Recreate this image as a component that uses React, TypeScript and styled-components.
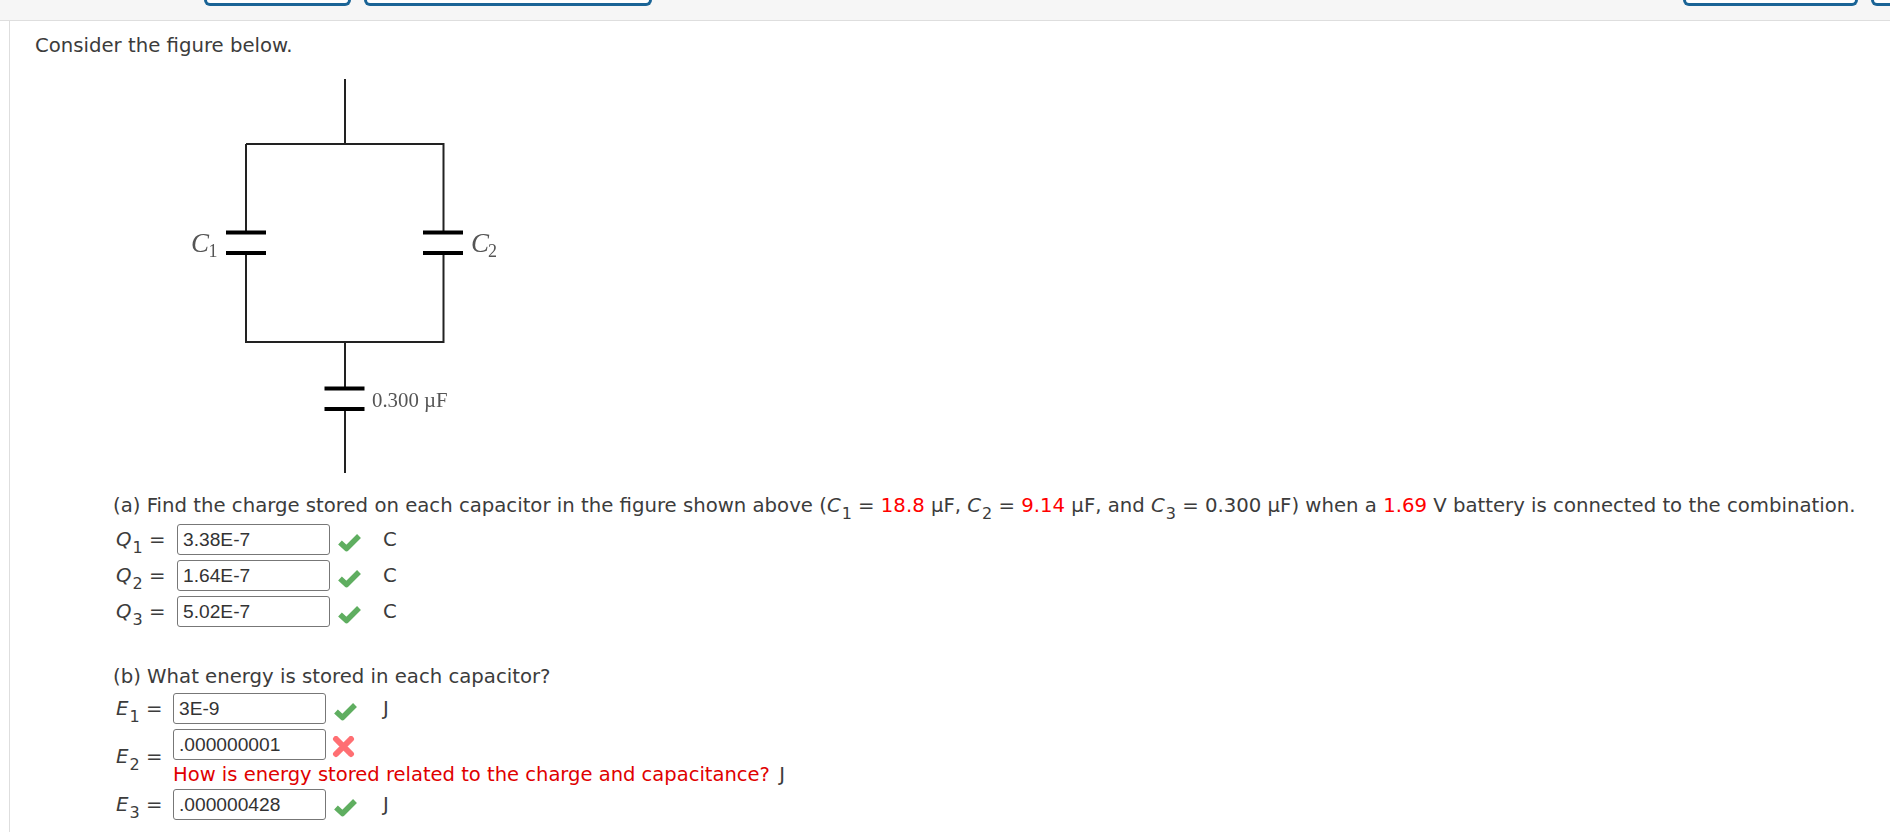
import React from 'react';
import styled, { createGlobalStyle } from 'styled-components';

const GlobalStyle = createGlobalStyle`
  html, body {
    margin: 0;
    padding: 0;
    height: 100%;
    overflow: hidden;
    background: #fff;
    color: #3c3c3c;
    font-family: "DejaVu Sans", Verdana, sans-serif;
    font-size: 19.7px;
  }
`;

const TopBar = styled.div`
  display: flex;
  gap: 13px;
  height: 20px;
  padding-left: 204px;
  background: #f6f6f6;
  border-bottom: 1px solid #dedede;
  overflow: hidden;
`;

const BarButton = styled.div<{ $width: number; $push?: boolean; $bleed?: number }>`
  flex: none;
  box-sizing: border-box;
  width: ${p => p.$width}px;
  height: 6px;
  margin-left: ${p => (p.$push ? 'auto' : '0')};
  margin-right: ${p => -(p.$bleed ?? 0)}px;
  background: #fff;
  border: 3px solid #1a6496;
  border-top: 0;
  border-radius: 0 0 6px 6px;
`;

const Main = styled.div`
  margin-left: 9px;
  padding: 14px 0 0 25px;
  height: 800px;
  border-left: 1px solid #dedede;
`;

const Text = styled.div`
  line-height: 22px;
  white-space: nowrap;
`;

const Figure = styled.svg`
  display: block;
  width: 340px;
  height: 425px;
  margin: 13px 0 0 145px;
`;

const Part = styled.div<{ $top?: number }>`
  margin-left: 78px;
  margin-top: ${p => p.$top ?? 0}px;
`;

const Rows = styled.div<{ $top: number }>`
  display: flex;
  flex-direction: column;
  gap: 5px;
  margin-top: ${p => p.$top}px;
`;

const Row = styled.div`
  display: flex;
  align-items: center;
`;

const Label = styled.div<{ $width: number }>`
  flex: none;
  width: ${p => p.$width}px;
  padding-left: 3px;
  box-sizing: border-box;
  white-space: nowrap;
`;

const Var = styled.i`
  font-style: italic;
`;

const Sub = styled.sub`
  font-size: 16px;
  line-height: 0;
  vertical-align: -7px;
  padding-left: 1px;
`;

const Field = styled.div`
  display: flex;
  align-items: center;
  box-sizing: border-box;
  width: 153px;
  height: 31px;
  padding-left: 5px;
  border: 1px solid #777;
  border-radius: 3px;
  font-family: "Liberation Sans", Arial, sans-serif;
  font-size: 19.2px;
  color: #333;
`;

const Mark = styled.svg`
  flex: none;
  width: 26px;
  height: 22px;
  margin: 5px 0 0 6px;
  filter: blur(0.5px);
`;

const Unit = styled.span<{ $gap: number }>`
  margin-left: ${p => p.$gap}px;
`;

const Red = styled.span`
  color: #f00;
`;

const Hint = styled.div`
  margin: 5px 0 -1px;
  line-height: 20px;
  font-size: 19.55px;
  color: #e00000;
  white-space: nowrap;
`;

const HintUnit = styled.span`
  margin-left: 3px;
  color: #3c3c3c;
`;

const CircuitGroup = styled.g`
  filter: blur(0.45px);
`;

const Check = () => (
  <Mark viewBox="0 0 26 22">
    <path d="M4 11.5 L10.5 17.5 L23 5" fill="none" stroke="#5fae60" strokeWidth="5.5" strokeLinejoin="round" />
  </Mark>
);

const Cross = () => (
  <Mark viewBox="0 0 26 22">
    <path d="M4 3 L19 18 M19 3 L4 18" fill="none" stroke="#ff6f73" strokeWidth="6" strokeLinecap="round" />
  </Mark>
);

// the circuit image, coordinates are page pixels minus the svg origin (180, 70)
const Circuit = () => (
  <Figure viewBox="0 0 340 425">
    <CircuitGroup>
      <g fill="none" stroke="#222" strokeWidth="2">
        <path d="M165 9 V74 M66 74 H263.5 V162 M66 74 V162 M66 183 V272 H263.5 V183" />
        <path d="M165 272 V318 M165 339 V403" />
      </g>
      <g fill="none" stroke="#000" strokeWidth="3.8">
        <path d="M46 162.5 H86 M46 183 H86" />
        <path d="M243 162.5 H283 M243 183 H283" />
        <path d="M144.5 318.5 H184.5 M144.5 339 H184.5" />
      </g>
      <g fill="#555" fontFamily="'Liberation Serif', serif">
        <text x="11" y="181.5" fontSize="27" fontStyle="italic">C</text>
        <text x="28.5" y="187" fontSize="18">1</text>
        <text x="291" y="181.5" fontSize="27" fontStyle="italic">C</text>
        <text x="308" y="187" fontSize="18">2</text>
        <text x="192" y="337" fontSize="20.8">0.300 µF</text>
      </g>
    </CircuitGroup>
  </Figure>
);

const App: React.FC = () => (
  <>
    <GlobalStyle />
    <TopBar>
      <BarButton $width={147} />
      <BarButton $width={288} />
      <BarButton $width={175} $push />
      <BarButton $width={60} $bleed={41} />
    </TopBar>
    <Main>
      <Text>Consider the figure below.</Text>
      <Circuit />
      <Part>
        <Text>
          (a) Find the charge stored on each capacitor in the figure shown above (<Var>C</Var><Sub>1</Sub> = <Red>18.8</Red> µF, <Var>C</Var><Sub>2</Sub> = <Red>9.14</Red> µF, and <Var>C</Var><Sub>3</Sub> = 0.300 µF) when a <Red>1.69</Red> V battery is connected to the combination.
        </Text>
        <Rows $top={7}>
          <Row>
            <Label $width={64}><Var>Q</Var><Sub>1</Sub> =</Label>
            <Field>3.38E-7</Field>
            <Check />
            <Unit $gap={21}>C</Unit>
          </Row>
          <Row>
            <Label $width={64}><Var>Q</Var><Sub>2</Sub> =</Label>
            <Field>1.64E-7</Field>
            <Check />
            <Unit $gap={21}>C</Unit>
          </Row>
          <Row>
            <Label $width={64}><Var>Q</Var><Sub>3</Sub> =</Label>
            <Field>5.02E-7</Field>
            <Check />
            <Unit $gap={21}>C</Unit>
          </Row>
        </Rows>
      </Part>
      <Part $top={39}>
        <Text>(b) What energy is stored in each capacitor?</Text>
        <Rows $top={5}>
          <Row>
            <Label $width={60}><Var>E</Var><Sub>1</Sub> =</Label>
            <Field>3E-9</Field>
            <Check />
            <Unit $gap={25}>J</Unit>
          </Row>
          <Row>
            <Label $width={60}><Var>E</Var><Sub>2</Sub> =</Label>
            <div>
              <Row>
                <Field>.000000001</Field>
                <Cross />
              </Row>
              <Hint>How is energy stored related to the charge and capacitance?<HintUnit> J</HintUnit></Hint>
            </div>
          </Row>
          <Row>
            <Label $width={60}><Var>E</Var><Sub>3</Sub> =</Label>
            <Field>.000000428</Field>
            <Check />
            <Unit $gap={25}>J</Unit>
          </Row>
        </Rows>
      </Part>
    </Main>
  </>
);

export default App;
